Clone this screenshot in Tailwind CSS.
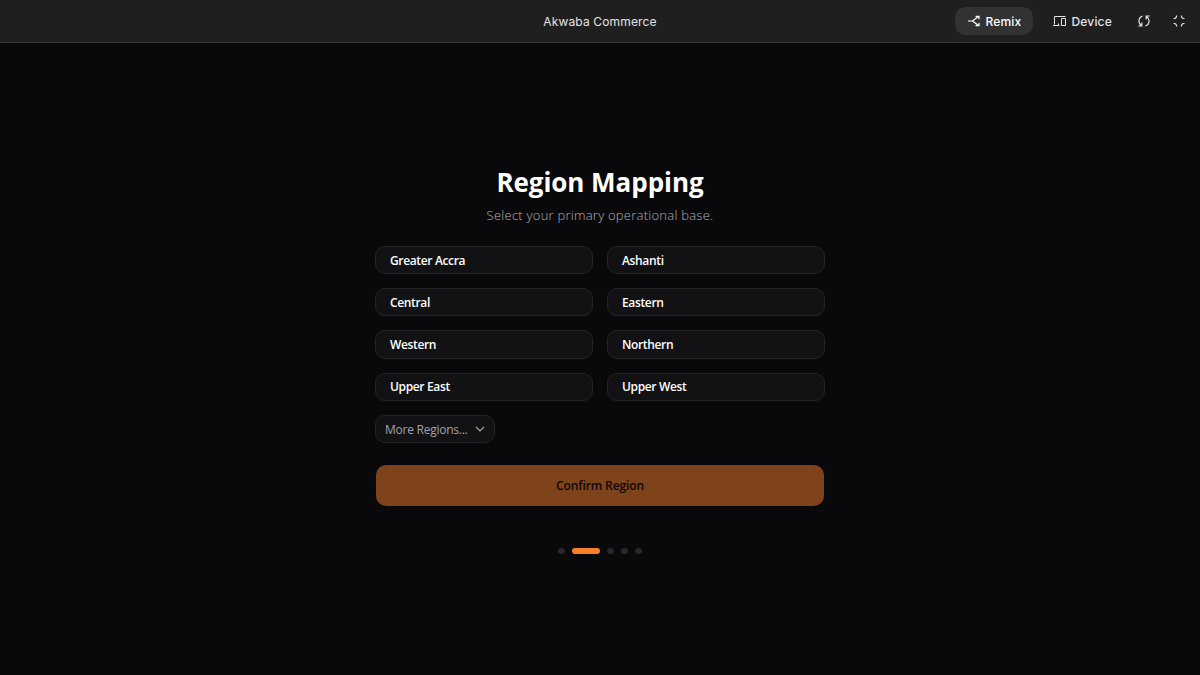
<!DOCTYPE html>
<html lang="en">
<head>
  <meta charset="UTF-8">
  <title>Akwaba Commerce</title>
  <meta name="viewport" content="width=device-width, initial-scale=1.0">
  <script src="https://cdn.jsdelivr.net/npm/@tailwindcss/browser@4"></script>
</head>
<body class="flex h-screen flex-col overflow-hidden bg-[#09090b] font-['Open_Sans',sans-serif] text-white">

  <header class="grid h-[43px] shrink-0 grid-cols-[1fr_auto_1fr] items-center border-b border-[#353737] bg-[#1f1f1f] font-[Inter,sans-serif] text-[#e3e3e6]">
    <div></div>
    <h1 class="pt-px text-xs tracking-[0.16px]">Akwaba Commerce</h1>
    <div class="flex items-center justify-end pr-[15px]">
      <button class="flex h-7 w-[78px] items-center rounded-[10px] bg-[#323232] pl-[13px] text-xs font-medium tracking-[0.2px] text-white">
        <svg class="mr-[5px] h-3 w-3" viewBox="0 0 12 12" fill="none" stroke="currentColor" stroke-width="1.2">
          <path d="M0 6h4.5L10.5 1.5M4.5 6l6 4.5M7.5 1.3H11v3M7.5 10.7H11v-3"/>
        </svg>
        <span class="pt-px">Remix</span>
      </button>
      <button class="ml-5 flex items-center text-xs font-medium tracking-[0.2px]">
        <svg class="mr-[5px] h-3 w-[13px]" viewBox="0 0 13 12" fill="none" stroke="currentColor">
          <path d="M12.5 1.5h-11v8M0 10.5h6.5M8.5 3.5h4v7h-4zM5.5 8.5v2"/>
        </svg>
        <span class="pt-px">Device</span>
      </button>
      <button class="ml-[26px]">
        <svg class="h-3 w-3" viewBox="0 0 12 12" fill="none" stroke="currentColor" stroke-width="1.2">
          <path d="M4.5 1C.3 2.5-.4 7.5 3.5 10.8M.3 11h3.500V7.500M7.5 11c4.200-1.500 4.900-6.500 1-9.800M11.700 1H8.200v3.500"/>
        </svg>
      </button>
      <button class="ml-[23px]">
        <svg class="h-3 w-3" viewBox="0 0 12 12" fill="none" stroke="currentColor" stroke-width="1.2">
          <path d="M3.500 .5v1.500M2 3.500H.5M8.500 .5v1.500M10 3.500h1.500M3.500 11.500V10M2 8.500H.5M8.500 11.500V10M10 8.500h1.500M3.500 2L2 3.500M8.500 2L10 3.500M3.500 10L2 8.500M8.500 10L10 8.500"/>
        </svg>
      </button>
    </div>
  </header>

  <main class="flex flex-col items-center pt-[122px]">
    <h2 class="text-[26px] leading-[35px] font-bold tracking-[-0.05px] whitespace-nowrap">Region Mapping</h2>
    <p class="mt-[5px] text-[13px] leading-5 font-light tracking-[0.25px] whitespace-nowrap text-[#b0b0b8]">Select your primary operational base.</p>

    <div class="mt-[21px] w-[450px]">
      <div class="grid grid-cols-2 gap-[14px] text-xs font-semibold tracking-[-0.35px]">
        <button class="h-[28.2px] rounded-[10px] border border-[#242427] bg-[#121214] px-[14px] pt-px text-left">Greater Accra</button>
        <button class="h-[28.2px] rounded-[10px] border border-[#242427] bg-[#121214] px-[14px] pt-px text-left">Ashanti</button>
        <button class="h-[28.2px] rounded-[10px] border border-[#242427] bg-[#121214] px-[14px] pt-px text-left">Central</button>
        <button class="h-[28.2px] rounded-[10px] border border-[#242427] bg-[#121214] px-[14px] pt-px text-left">Eastern</button>
        <button class="h-[28.2px] rounded-[10px] border border-[#242427] bg-[#121214] px-[14px] pt-px text-left">Western</button>
        <button class="h-[28.2px] rounded-[10px] border border-[#242427] bg-[#121214] px-[14px] pt-px text-left">Northern</button>
        <button class="h-[28.2px] rounded-[10px] border border-[#242427] bg-[#121214] px-[14px] text-left">Upper East</button>
        <button class="h-[28.2px] rounded-[10px] border border-[#242427] bg-[#121214] px-[14px] text-left">Upper West</button>
      </div>

      <button class="mt-[14px] flex h-7 w-[120px] items-center justify-between rounded-[10px] border border-[#242427] bg-[#121214] pr-[9px] pl-[9px] text-xs tracking-[-0.25px] text-[#a1a1aa]">
        <span class="pt-[2px]">More Regions...</span>
        <svg class="h-[10px] w-[10px]" viewBox="0 0 10 10" fill="none" stroke="currentColor" stroke-width="1.2">
          <path d="M1 3l4 4 4-4"/>
        </svg>
      </button>

      <button class="mx-auto mt-[22px] block h-[41px] w-[448px] rounded-[10px] bg-[#7e431a] pt-px text-xs font-semibold tracking-[-0.1px] text-[#0b0909]">Confirm Region</button>
    </div>

    <!-- step indicator -->
    <div class="mt-[42px] flex items-center gap-[7px]">
      <span class="h-[6px] w-[7px] rounded-full bg-[#27272a]"></span>
      <span class="h-[6px] w-7 rounded-full bg-[#f58027]"></span>
      <span class="h-[6px] w-[7px] rounded-full bg-[#27272a]"></span>
      <span class="h-[6px] w-[7px] rounded-full bg-[#27272a]"></span>
      <span class="h-[6px] w-[7px] rounded-full bg-[#27272a]"></span>
    </div>
  </main>

</body>
</html>
